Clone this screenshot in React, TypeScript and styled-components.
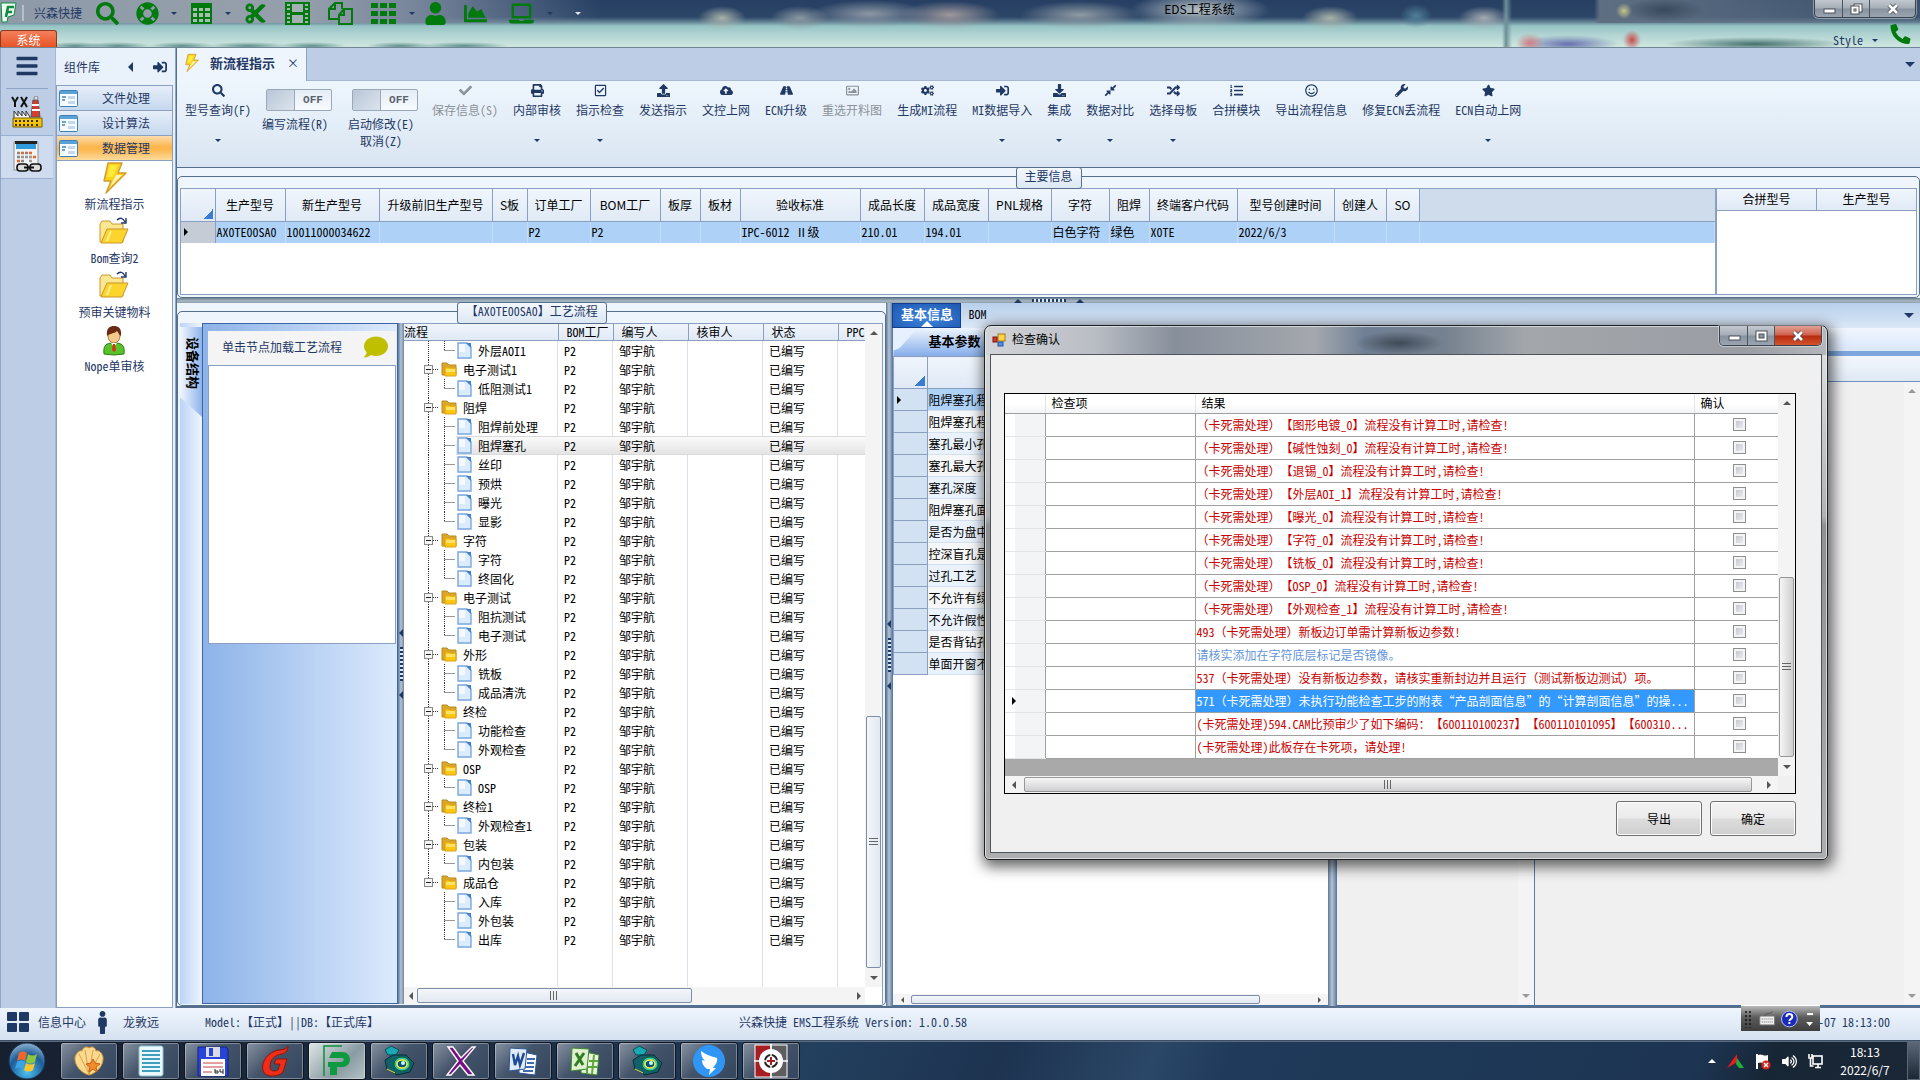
import React from "react";
import styled, { createGlobalStyle, css } from "styled-components";
import {
  FaSearch, FaLifeRing, FaCut, FaUser, FaChartArea, FaLaptop,
  FaCheck, FaPrint, FaRegCheckSquare, FaUpload, FaCloudUploadAlt, FaRoad, FaRegImage, FaCogs,
  FaSignInAlt, FaDownload, FaCompressAlt, FaRandom, FaListOl, FaRegSmile, FaWrench, FaStar,
  FaPhoneAlt, FaComment, FaBars, FaMale, FaVolumeUp,
} from "react-icons/fa";

const song = '"Noto Sans Mono CJK SC", "Noto Sans CJK SC", sans-serif';
const hei = '"Noto Sans CJK SC", sans-serif';
const navy = "#1f3864";
const edge = "#566f8c";
const line = "#8ba0c0";

const Global = createGlobalStyle`
  * { box-sizing: border-box; }
  body { margin: 0; overflow: hidden; font: 12px/16px ${song}; text-spacing-trim: space-all; color: #000; background: #1d3149; }
  button { font: inherit; color: inherit; background: none; border: 0; padding: 0; margin: 0; white-space: nowrap; }
  input { margin: 0; }
  table { border-collapse: collapse; table-layout: fixed; }
  th, td { padding: 0; font-weight: 400; text-align: left; white-space: nowrap; overflow: hidden; }
`;

const Desktop = styled.div`
  position: relative;
  height: 100vh;
  display: grid;
  grid-template-rows: 48px minmax(0, 1fr) 33px 39px;
`;

/* ---------- shared bits ---------- */
const Tri = styled.i<{ $dir: "up" | "down" | "left" | "right"; $s?: number; $c?: string }>`
  display: block;
  width: 0;
  height: 0;
  flex: none;
  border: ${(p) => p.$s ?? 4}px solid transparent;
  ${(p) => {
    const c = p.$c ?? navy;
    if (p.$dir === "down") return css`border-top-color: ${c}; border-bottom-width: 0;`;
    if (p.$dir === "up") return css`border-bottom-color: ${c}; border-top-width: 0;`;
    if (p.$dir === "left") return css`border-right-color: ${c}; border-left-width: 0;`;
    return css`border-left-color: ${c}; border-right-width: 0;`;
  }}
`;

const Bar = styled.div<{ $v?: boolean; $size: number }>`
  display: flex;
  flex: none;
  flex-direction: ${(p) => (p.$v ? "column" : "row")};
  ${(p) => (p.$v ? `width: ${p.$size}px;` : `height: ${p.$size}px;`)}
  background: #f4f4f5;
`;
const BarEnd = styled.button<{ $v?: boolean; $size: number }>`
  flex: none;
  ${(p) => (p.$v ? `height: ${p.$size}px;` : `width: ${p.$size}px;`)}
  display: grid;
  place-items: center;
`;
const Gap = styled.div<{ $grow: number }>`
  flex: ${(p) => p.$grow} 1 0;
`;
const Thumb = styled.div<{ $grow: number; $v?: boolean; $grey?: boolean }>`
  flex: ${(p) => p.$grow} 1 0;
  display: grid;
  place-items: center;
  border: 1px solid ${(p) => (p.$grey ? "#979797" : "#7f8ea6")};
  border-radius: 2px;
  ${(p) => (p.$v ? "margin: 0 1px;" : "margin: 1px 0;")}
  background: linear-gradient(${(p) => (p.$v ? "to right" : "to bottom")}, ${(p) => (p.$grey ? "#f6f6f6, #cfcfd1" : "#f3f7fb, #e2e8f0")});
`;
const Grip = styled.i<{ $v?: boolean }>`
  display: block;
  width: ${(p) => (p.$v ? 9 : 8)}px;
  height: ${(p) => (p.$v ? 8 : 9)}px;
  background: repeating-linear-gradient(${(p) => (p.$v ? "to bottom" : "to right")}, #666 0 1px, transparent 1px 3px);
`;

function Scroll({ v, size = 16, end = 18, before = 0, thumb = 0, after = 1, grip, grey, c = "#555" }: {
  v?: boolean; size?: number; end?: number; before?: number; thumb?: number; after?: number; grip?: boolean; grey?: boolean; c?: string;
}) {
  const s = size > 12 ? 4 : 3;
  return (
    <Bar $v={v} $size={size}>
      <BarEnd $v={v} $size={end} aria-label={v ? "向上" : "向左"}><Tri $dir={v ? "up" : "left"} $s={s} $c={c} /></BarEnd>
      <Gap $grow={before} />
      {thumb > 0 && <Thumb $v={v} $grow={thumb} $grey={grey}>{grip && <Grip $v={v} />}</Thumb>}
      <Gap $grow={after} />
      <BarEnd $v={v} $size={end} aria-label={v ? "向下" : "向右"}><Tri $dir={v ? "down" : "right"} $s={s} $c={c} /></BarEnd>
    </Bar>
  );
}

/* ---------- title area ---------- */
const Title = styled.header`
  display: grid;
  grid-template-columns: auto minmax(0, 1fr) auto;
  border-bottom: 1px solid #6f8796;
  background:
    radial-gradient(ellipse 24px 12px at 722px 18px, #a9b2a9, transparent),
    radial-gradient(ellipse 30px 12px at 800px 18px, #8b98a0, transparent),
    radial-gradient(ellipse 60px 14px at 870px 14px, #8c97a4, transparent),
    radial-gradient(ellipse 50px 14px at 950px 15px, #a0989c, transparent),
    radial-gradient(ellipse 60px 14px at 1080px 15px, #8f9aa3, transparent),
    radial-gradient(ellipse 70px 18px at 1200px 10px, #b9c3c8, transparent),
    radial-gradient(ellipse 28px 12px at 1330px 18px, #a9b3ab, transparent),
    radial-gradient(ellipse 16px 12px at 1416px 16px, #4f7f98, transparent),
    radial-gradient(ellipse 26px 12px at 1484px 18px, #a6acb2, transparent),
    radial-gradient(ellipse 8px 8px at 1624px 11px, #c4c48c, transparent),
    radial-gradient(ellipse 40px 12px at 1664px 10px, #39495c, transparent),
    linear-gradient(to right, transparent 1502px, #6d8f96 1506px, transparent 1512px),
    radial-gradient(ellipse 14px 10px at 1530px 43px, #cf7f84, transparent),
    radial-gradient(ellipse 50px 9px at 1568px 44px, #6670b0, transparent),
    radial-gradient(ellipse 9px 10px at 1632px 40px, #c94a48, transparent),
    radial-gradient(ellipse 90px 7px at 1755px 44px, #44706f, transparent),
    radial-gradient(ellipse 30px 4px at 75px 46px, #5d8d8a, transparent),
    radial-gradient(ellipse 34px 4px at 118px 46px, #5d8d8a, transparent),
    radial-gradient(ellipse 34px 4px at 182px 46px, #5d8d8a, transparent),
    radial-gradient(ellipse 40px 4px at 248px 46px, #5d8d8a, transparent),
    radial-gradient(ellipse 34px 4px at 312px 46px, #5d8d8a, transparent),
    radial-gradient(ellipse 34px 4px at 400px 46px, #5d8d8a, transparent),
    radial-gradient(ellipse 44px 4px at 464px 46px, #5d8d8a, transparent),
    linear-gradient(to right, transparent 1594px, #5f6f82 1600px, #5f6f8255 100%) 0 0 / 100% 23px no-repeat,
    linear-gradient(to right, #8e9aa8, #96a0ac 300px, #76849a 420px, transparent 600px) 0 0 / 100% 23px no-repeat,
    linear-gradient(#263f63, #2c4668 17px, #56748a 21px, #97c4c5 26px, #b4d6d4 36px, #cfe6df);
`;
const TitleLeft = styled.div`
  display: flex;
  flex-direction: column;
  justify-content: space-between;
`;
const Quick = styled.div`
  display: flex;
  height: 26px;
  align-items: center;
  color: ${navy};
`;
const Brand = styled.span`
  padding: 0 13px 0 10px;
  margin-left: 5px;
  border-left: 2px solid #b6bec9;
`;
const QuickBtn = styled.button<{ $w: number }>`
  width: ${(p) => p.$w}px;
  height: 24px;
  color: #007a0c;
  display: flex;
  align-items: center;
  svg { width: 25px; height: 23px; }
`;
const QuickArrow = styled.button<{ $w: number }>`
  width: ${(p) => p.$w}px;
`;
const SystemTab = styled.button`
  width: 57px;
  height: 17px;
  color: #fff;
  line-height: 18px;
  border: 1px solid #8c3a20;
  border-bottom: 0;
  border-radius: 3px 3px 0 0;
  background: linear-gradient(#f4805c, #e85426);
  overflow: hidden;
`;
const AppName = styled.h1`
  margin: 0;
  text-align: center;
  font: 12px/17px ${hei};
`;
const TitleRight = styled.div`
  display: flex;
  flex-direction: column;
  align-items: flex-end;
  justify-content: space-between;
  padding-right: 4px;
`;
const Caption = styled.div`
  display: flex;
  border: 1px solid #38424e;
  border-top: 0;
  border-radius: 0 0 5px 5px;
  overflow: hidden;
  box-shadow: 0 0 0 1px #ffffff66;
`;
const CapBtn = styled.button<{ $w: number; $h: number; $red?: boolean }>`
  width: ${(p) => p.$w}px;
  height: ${(p) => p.$h}px;
  display: grid;
  place-items: center;
  background: ${(p) => (p.$red ? "linear-gradient(#e2a094, #cf5f4a 48%, #b8290d 52%, #d4552f)" : "linear-gradient(#c2c8cf, #a5adb6 48%, #8792a0 52%, #9ba5b0)")};
  & + & { border-left: 1px solid #4a5562; }
`;
const StyleRow = styled.div`
  display: flex;
  align-items: center;
  gap: 12px;
  height: 26px;
  color: ${navy};
  padding-right: 5px;
  svg { width: 21px; height: 20px; color: #007a0c; }
`;
const StyleBtn = styled.button`
  display: flex;
  align-items: center;
  gap: 9px;
  padding-top: 12px;
`;

const CapIcon = ({ k }: { k: "min" | "max" | "close" | "restore" }) => (
  <svg width="14" height="12" viewBox="0 0 14 12" fill="none">
    {k === "min" && <rect x="2" y="6" width="11" height="4" fill="#fff" stroke="#4a5058" />}
    {k === "max" && <><rect x="2" y="1" width="11" height="10" fill="#fff" stroke="#4a5058" /><rect x="5" y="4" width="5" height="4" fill="#8b95a0" stroke="#4a5058" /></>}
    {k === "restore" && <><rect x="5" y="1" width="8" height="8" fill="#fff" stroke="#4a5058" /><rect x="2" y="3" width="8" height="8" fill="#fff" stroke="#4a5058" /><rect x="5" y="6" width="2" height="2" stroke="#4a5058" /></>}
    {k === "close" && <><path d="M3 2l8 8M11 2l-8 8" stroke="#4a5058" strokeWidth="4.4" /><path d="M3 2l8 8M11 2l-8 8" stroke="#fff" strokeWidth="2.6" /></>}
  </svg>
);
const TableIcon = () => (
  <svg viewBox="0 0 25 23"><path d="M2 1h21v21H2z" fill="currentColor" /><path d="M4 6h4v3H4zM10 6h4v3h-4zM16 6h5v3h-5zM4 11h4v4H4zM10 11h4v4h-4zM16 11h5v4h-5zM4 17h4v3H4zM10 17h4v3h-4zM16 17h5v3h-5z" fill="#a9bdb4" /></svg>
);
const FilmIcon = () => (
  <svg viewBox="0 0 25 23"><path d="M0 0h25v23H0z" fill="currentColor" /><path d="M7 2h11v8H7zM7 13h11v8H7zM2 2h3v2H2zM2 6h3v2H2zM2 11h3v2H2zM2 15h3v2H2zM2 19h3v2H2zM20 2h3v2h-3zM20 6h3v2h-3zM20 11h3v2h-3zM20 15h3v2h-3zM20 19h3v2h-3z" fill="#a3b0b4" /></svg>
);
const CopyIcon = () => (
  <svg viewBox="0 0 25 23" fill="none" stroke="currentColor" strokeWidth="2"><path d="M10 17H1V7l6-6h7v6" /><path d="M1 7h6V1M11 13l5-6h8v15H11zM11 13h5V7" /></svg>
);
const BlocksIcon = () => (
  <svg viewBox="0 0 25 23" fill="currentColor"><path d="M0 1h7v5H0zM9 1h7v5H9zM18 1h7v5h-7zM0 9h7v5H0zM9 9h7v5H9zM18 9h7v5h-7zM0 17h7v5H0zM9 17h7v5H9zM18 17h7v5h-7z" /></svg>
);

/* ---------- left side ---------- */
const Main = styled.div`
  display: grid;
  grid-template-columns: 55px 121px minmax(0, 1fr);
  background: #bccde5;
`;
const Rail = styled.nav`
  display: flex;
  flex-direction: column;
  align-items: stretch;
  padding-right: 2px;
  border-left: 1px solid #90a6c4;
  background: #bccde5;
`;
const RailBtn = styled.button<{ $h: number; $on?: boolean }>`
  height: ${(p) => p.$h}px;
  display: grid;
  place-items: center;
  color: ${navy};
  ${(p) => p.$on && "background: #cfdcef; border-top: 1px solid #9bb0ce; border-bottom: 1px solid #9bb0ce;"}
`;
const BarsBtn = styled(RailBtn)`
  padding-bottom: 5px;
`;
const RailRule = styled.hr`
  margin: 0 5px;
  border: 0;
  border-top: 1px solid #8fa6c6;
`;
const Library = styled.aside`
  display: flex;
  flex-direction: column;
  border-left: 1px solid #a5b7d1;
  border-right: 1px solid #90a6c4;
  padding-right: 2px;
  background: #e9f1fa;
`;
const LibHead = styled.div`
  height: 37px;
  display: flex;
  align-items: center;
  padding: 0 6px 0 8px;
  color: ${navy};
  font-family: ${hei};
  span { flex: 1; }
  button { margin-left: 20px; display: grid; place-items: center; }
  svg { width: 14px; height: 14px; }
`;
const LibGroup = styled.button<{ $on?: boolean }>`
  height: 25px;
  display: flex;
  align-items: center;
  gap: 24px;
  padding-left: 2px;
  color: ${navy};
  border: 1px solid ${line};
  border-bottom: 0;
  background: ${(p) => (p.$on ? "linear-gradient(#fbdcae, #fcb64e 45%, #fcb64e 55%, #fddc9c)" : "linear-gradient(#e6eef9, #c6d8ee)")};
`;
const LibBody = styled.div`
  flex: 1;
  display: flex;
  flex-direction: column;
  align-items: center;
  background: #fff;
  border: 1px solid ${line};
  padding-top: 1px;
`;
const LibItem = styled.button`
  height: 54px;
  display: flex;
  flex-direction: column;
  align-items: center;
  justify-content: space-between;
  color: ${navy};
  padding-bottom: 4px;
  svg { flex: none; }
`;

const Bolt = ({ w = 26, h = 32 }: { w?: number; h?: number }) => (
  <svg width={w} height={h} viewBox="0 0 26 32">
    <path d="M7 1h14l-4 10h8L5 31l5-12H3z" fill="#fbd21c" stroke="#d39a2d" strokeWidth="1.4" strokeLinejoin="round" />
    <path d="M9 3h8l-5 12H6z" fill="#fdea3c" /><path d="M15 13h6L9 25l4-8z" fill="#fdf3b4" />
  </svg>
);
const FolderOpen = () => (
  <svg width="30" height="28" viewBox="0 0 30 28">
    <path d="M1 8l2-3h8l2 3h11v18H1z" fill="#fbe692" stroke="#c99a2c" /><path d="M2 27l6-14h21l-6 14z" fill="#fcd52c" stroke="#c9952a" />
    <path d="M8 25l4-10" stroke="#fdf09a" strokeWidth="2" /><path d="M18 4c3-3 6-2 8 2M27 2v5h-5" fill="none" stroke="#23386e" strokeWidth="1.4" />
  </svg>
);
const Person = () => (
  <svg width="26" height="32" viewBox="0 0 26 32">
    <path d="M3 30c-1-9 2-11 10-11s11 2 10 11q-10 2-20 0z" fill="#56c32b" stroke="#2f7d16" /><ellipse cx="13" cy="12" rx="6" ry="7" fill="#f4c98a" stroke="#a87938" />
    <path d="M6 12C5 4 9 2 13 2s8 2 7 10c-2-1-3-4-4-5-3 3-7 2-10 5z" fill="#6b2a14" /><path d="M10 19l3 4 3-4z" fill="#fff" /><path d="M12 20h2l1 6-2 2-2-2z" fill="#d7301b" />
  </svg>
);
const FormIcon = () => (
  <svg width="19" height="17" viewBox="0 0 19 17">
    <rect x=".5" y=".5" width="18" height="16" rx="1" fill="#f6fbff" stroke="#3d7eb5" /><rect x="1" y="1" width="17" height="3" fill="#5aa2d6" />
    <path d="M3 7h4M3 10h3" stroke="#4a86b8" strokeWidth="1.5" /><rect x="9" y="6" width="7" height="3" fill="#c4d8ec" /><rect x="9" y="11" width="7" height="3" fill="#c4d8ec" />
  </svg>
);
const Factory = () => (
  <svg width="32" height="32" viewBox="0 0 32 32">
    <path d="M1 1l3 5v5M7 1L4 6" stroke="#111" strokeWidth="2" fill="none" /><path d="M10 1l6 10M16 1l-6 10" stroke="#111" strokeWidth="2" />
    <path d="M22 4h5l2 17h-9z" fill="#d83c2b" stroke="#555" /><path d="M21 9h7M21 14h8" stroke="#fff" strokeWidth="2" /><circle cx="25" cy="2" r="2" fill="#ddd" stroke="#888" />
    <path d="M3 22v-7l4 5v-5l4 5v-5l4 5v-5l4 6v3H3z" fill="#f4f4f4" stroke="#333" /><path d="M2 22h29v9H2z" fill="#f2c40e" stroke="#7c6200" />
    <path d="M5 24v2M9 24v2M13 24v2M17 24v2M21 24v2M26 24v2M5 28v2M9 28v2M13 28v2M17 28v2M21 28v2M26 28v2" stroke="#3b3000" strokeWidth="2" />
  </svg>
);
const Calc = () => (
  <svg width="30" height="34" viewBox="0 0 30 34">
    <rect x="2" y="2" width="24" height="28" fill="#f1f3f4" stroke="#8a9299" /><rect x="3" y="1" width="22" height="3" fill="#222" /><rect x="4" y="4" width="20" height="5" fill="#2f9bdc" />
    <path d="M5 13h3M13 13h3M5 17h3M9 21h3" stroke="#888" strokeWidth="2.4" /><path d="M9 13h3M17 13h3M21 17h3M5 21h3" stroke="#f0632a" strokeWidth="2.4" /><path d="M9 17h3M13 17h3M17 17h3M17 21h3" stroke="#999" strokeWidth="2.4" />
    <rect x="5" y="24" width="11" height="7" rx="3" fill="#ddd" stroke="#111" strokeWidth="1.6" /><rect x="18" y="24" width="11" height="7" rx="3" fill="#ddd" stroke="#111" strokeWidth="1.6" /><path d="M12 27.500h10" stroke="#111" strokeWidth="2" />
  </svg>
);

/* ---------- workspace ---------- */
const Work = styled.main`
  display: grid;
  grid-template-rows: 33px 87px 130px 5px minmax(0, 1fr);
  min-width: 0;
  border-left: 1px solid ${edge};
  border-bottom: 2px solid ${edge};
`;
const DocTabs = styled.div`
  display: flex;
  align-items: center;
  justify-content: space-between;
  padding-right: 5px;
  border-bottom: 1px solid #a7b7cf;
  background: #bccde5;
`;
const DocTab = styled.div`
  align-self: stretch;
  display: flex;
  align-items: center;
  gap: 11px;
  width: 130px;
  padding: 0 7px 4px 7px;
  margin-bottom: -1px;
  color: ${navy};
  background: #eef5fc;
  border-right: 1px solid #8ea3c0;
  strong { flex: 1; font-size: 13px; }
  svg { width: 15px; height: 22px; }
`;
const Toolbar = styled.div`
  display: flex;
  color: ${navy};
  background: linear-gradient(#eef6fd, #d9e5f2);
  border-bottom: 1px solid ${edge};
`;
const Tool = styled.button`
  display: grid;
  grid-template-rows: 18px 22px 38px;
  place-items: center;
  align-content: start;
  padding: 0 7px 0 8px;
  &:disabled { color: #8c9299; }
  svg { width: 13px; height: 13px; }
`;
const Toggles = styled.div`
  display: flex;
  margin-left: -6px;
`;
const Toggle = styled.label`
  width: 86px;
  padding-top: 8px;
  display: flex;
  flex-direction: column;
  align-items: center;
  line-height: 17px;
  white-space: nowrap;
`;
const Track = styled.span`
  display: flex;
  width: 66px;
  height: 22px;
  margin: 0 0 4px 8px;
  border: 1px solid #9aa8bb;
  border-radius: 2px;
  background: linear-gradient(#e4ecf5, #f8fbfe);
  color: #5a6470;
  font: bold 11px/20px "Liberation Mono", monospace;
  span { flex: 1; text-align: center; }
`;
const SwitchInput = styled.input`
  appearance: none;
  width: 28px;
  height: 20px;
  border-right: 1px solid #9aa8bb;
  background: linear-gradient(135deg, #b9c6d6, #dbe4ee);
`;

const Pane = styled.section`
  display: flex;
  min-height: 0;
  min-width: 0;
  background: #eef5fc;
  padding-top: 8px;
`;
const Group = styled.div<{ $pb: number }>`
  position: relative;
  flex: 1;
  display: flex;
  min-width: 0;
  border: 1px solid ${edge};
  border-radius: 5px;
  padding: 11px 2px ${(p) => p.$pb}px;
`;
const Badge = styled.h2`
  position: absolute;
  top: -10px;
  left: 50%;
  transform: translateX(-50%);
  margin: 0;
  height: 22px;
  padding: 0 8px;
  font: 12px/15px ${song};
  color: ${navy};
  white-space: nowrap;
  border: 1px solid ${edge};
  border-radius: 3px;
  background: linear-gradient(#f3f8fd, #dde8f4);
`;
const GridBox = styled.div<{ $w?: number }>`
  ${(p) => (p.$w ? `flex: none; width: ${p.$w}px;` : "flex: 1; min-width: 0;")}
  border: 1px solid ${line};
  background: #fff;
  overflow: hidden;
`;
const DataTable = styled.table<{ $h: number }>`
  width: 100%;
  th {
    height: ${(p) => p.$h}px;
    font-family: ${hei};
    text-align: center;
    border-right: 1px solid ${line};
    border-bottom: 1px solid ${line};
    background: linear-gradient(#f0f5fc, #e0eaf5);
  }
  th:last-child { border-right: 0; }
  td {
    height: 22px;
    padding-left: 1px;
    background: #aed2f7;
    border-right: 1px solid #c4dcf5;
  }
`;
const RestTh = styled.th`
  && { background: #cfdcec; }
`;
const CornerTh = styled.th`
  && { background: linear-gradient(135deg, transparent 50%, #3a7bd5 50%) calc(100% - 2px) calc(100% - 2px) / 10px 10px no-repeat, linear-gradient(#f0f5fc, #dfe9f5); }
`;
const PointerTd = styled.td`
  && { background: #c5ccd6; padding-left: 3px; border-right-color: ${line}; }
`;

const SplitH = styled.div`
  display: flex;
  justify-content: center;
  align-items: center;
  gap: 10px;
  background: linear-gradient(#6f8090, #a9b8c4 60%, #8b9caa);
`;
const SplitV = styled.div<{ $w: number }>`
  width: ${(p) => p.$w}px;
  flex: none;
  display: flex;
  flex-direction: column;
  justify-content: center;
  align-items: center;
  gap: 10px;
  background: linear-gradient(to right, #60799a, #b5c4d4 50%, #6d86a5);
`;
const Dots = styled.i<{ $v?: boolean }>`
  ${(p) => (p.$v ? "width: 3px; height: 34px;" : "height: 3px; width: 34px;")}
  background: repeating-linear-gradient(${(p) => (p.$v ? "to bottom" : "to right")}, ${navy} 0 2px, #dbe6f3 2px 4px);
`;

const Lower = styled.div`
  display: grid;
  grid-template-columns: minmax(0, 709fr) 6px minmax(0, 1027fr);
  min-height: 0;
  background: #eef5fc;
`;

const SideTabs = styled.div`
  width: 22px;
  flex: none;
  padding-top: 4px;
  background: linear-gradient(to right, #bcd4f8, #eef5ff);
`;
const SideTab = styled.button`
  width: 22px;
  height: 90px;
  padding-left: 3px;
  padding-bottom: 18px;
  writing-mode: vertical-rl;
  text-orientation: sideways;
  text-align: center;
  font-weight: 700;
  font-size: 13px;
  background: linear-gradient(to right, #f2f7ff, #8fb4ea);
  clip-path: polygon(0 0, 100% 0, 100% 100%, 0 78%);
`;
const Device = styled.div`
  width: 196px;
  flex: none;
  padding: 7px 1px 0 5px;
  border: 1px solid #3e64a6;
  background: linear-gradient(to right, #8db3e9, #dceafc);
`;
const DeviceHead = styled.div`
  height: 34px;
  display: flex;
  align-items: center;
  justify-content: space-between;
  padding: 0 7px 2px 14px;
  color: ${navy};
  background: #f4f4f4;
  svg { width: 26px; height: 24px; color: #bfbf00; }
`;
const DeviceList = styled.div`
  height: 279px;
  background: #fff;
  border: 1px solid ${line};
`;
const TreeBox = styled.div`
  flex: 1;
  min-width: 0;
  display: grid;
  grid-template-columns: minmax(0, 1fr) 17px;
  grid-template-rows: minmax(0, 1fr) 17px;
  border-right: 1px solid ${line};
  border-top: 1px solid ${line};
  background: #fff;
`;
const TreeView = styled.div`
  overflow: hidden;
  background: linear-gradient(to right, transparent 153px, #dcdfe4 153px 154px, transparent 154px 208px, #dcdfe4 208px 209px, transparent 209px 283px, #dcdfe4 283px 284px, transparent 284px 358px, #dcdfe4 358px 359px, transparent 359px 433px, #dcdfe4 433px 434px, transparent 434px);
`;
const TreeTable = styled.table`
  width: 100%;
  th {
    height: 16px;
    line-height: 14px;
    padding-left: 8px;
    border-right: 1px solid ${line};
    border-bottom: 1px solid ${line};
    background: linear-gradient(#f0f5fc, #dfe9f5);
  }
  th:first-child { padding-left: 0; }
  th:last-child { border-right: 0; }
`;
const TreeRow = styled.tr<{ $sel?: boolean }>`
  td { height: 19px; padding-left: 6px; line-height: 17px; }
  td:first-child { padding-left: 0; }
  ${(p) => p.$sel && css`
    td:not(:first-child), td:first-child span { background: linear-gradient(#dadada 1px, #fafafa 1px, #e4e4e4 18px, #dadada 18px); }
  `}
`;
const NodeCell = styled.div`
  display: flex;
  height: 19px;
  svg { flex: none; }
`;
const NodeLabel = styled.span`
  flex: 1;
  display: flex;
  align-items: center;
  gap: 6px;
  padding-left: 1px;
  line-height: 17px;
`;

/* ---------- right detail ---------- */
const Detail = styled.div`
  display: grid;
  grid-template-rows: 25px minmax(0, 1fr);
  min-height: 0;
`;
const BlueTabs = styled.div`
  display: flex;
  align-items: center;
  padding-right: 6px;
  background: linear-gradient(#b9cfeb, #dbe8f7);
`;
const BlueTab = styled.button<{ $on?: boolean }>`
  position: relative;
  align-self: stretch;
  padding: 0 7px 3px;
  ${(p) => p.$on && css`
    width: 69px;
    color: #fff;
    font-weight: 700;
    font-size: 13px;
    background: radial-gradient(ellipse at 50% 60%, #3f86dd, #1d57b0);
    border: 1px solid #123f8c;
    &::after {
      content: "";
      position: absolute;
      left: 50%;
      bottom: 0;
      margin-left: -6px;
      border: 6px solid transparent;
      border-top-width: 0;
      border-bottom-color: #fff;
    }
  `}
`;
const Filler = styled.div`
  flex: 1;
`;
const Panels = styled.div`
  display: grid;
  grid-template-columns: minmax(0, 435fr) 8px minmax(0, 198fr) minmax(0, 385fr);
  min-height: 0;
`;
const Panel = styled.div`
  display: flex;
  flex-direction: column;
  min-width: 0;
  min-height: 0;
  border-left: 1px solid #5a7cae;
  border-bottom: 1px solid #4a6ca0;
`;
const SubTabs = styled.div<{ $plain?: boolean }>`
  height: 28px;
  flex: none;
  display: flex;
  border-bottom: ${(p) => (p.$plain ? "5px solid #7da5de" : "0")};
  background: ${(p) => (p.$plain ? "linear-gradient(#f0f6fe, #dae8fb)" : "linear-gradient(to right, #e6f0fe, #d2e3fa)")};
`;
const SubTab = styled.button`
  width: 150px;
  padding: 0 0 3px 35px;
  text-align: left;
  font-weight: 700;
  font-size: 13px;
  background: linear-gradient(#eef5ff, #86aeea);
  clip-path: polygon(0 80%, 6px 72%, 22px 10%, 30px 0, 100% 0, 100% 100%, 0 100%);
`;
const ParamTable = styled.table`
  width: 100%;
  th { height: 32px; border: 1px solid ${line}; background: linear-gradient(#f0f5fc, #dfe9f5); }
  td { height: 22px; padding-left: 0; background: #eaf3fd; border-bottom: 1px solid #d2e0f0; }
  tr:nth-child(even) td { background: #f6f7f8; }
  td:first-child, tr:nth-child(even) td:first-child { background: #d3e2f3; border: 1px solid ${line}; padding-left: 3px; }
  tr:first-child td:last-child { background: #aed2f7; }
`;
const Fill = styled.div<{ $bg: string }>`
  flex: 1;
  display: flex;
  justify-content: flex-end;
  min-height: 0;
  background: ${(p) => p.$bg};
`;
const PanelHead = styled.div`
  height: 26px;
  flex: none;
  background: linear-gradient(#f3f7fc, #dfe9f4);
  border-bottom: 1px solid #6f8fbe;
`;

/* ---------- dialog ---------- */
const Dialog = styled.section`
  position: absolute;
  top: 325px;
  right: 92px;
  width: 844px;
  padding: 0 5px 6px;
  border: 1px solid #1c1f24;
  border-radius: 7px 7px 5px 5px;
  background:
    radial-gradient(ellipse 44px 12px at 414px 17px, #3f4a56, transparent),
    linear-gradient(to right, #d2d4d8, #b9bdc4 110px, #878f9b 190px, #a4a8ae 330px, #6f7f94 380px, #76818f 460px, #a3a6ab 540px, #9a9ea4 760px, #b4b8bd) 0 0 / 100% 29px no-repeat,
    linear-gradient(#e2e3e4, #b0b1b3 190px, #8f9092 200px, #adaeb0);
  box-shadow: inset 0 0 0 1px #f2f2f2aa, 2px 4px 14px 3px #00000099;
`;
const DlgTitle = styled.div`
  display: flex;
  align-items: flex-start;
  height: 28px;
  h2 { flex: 1; margin: 0; font: 12px/16px ${hei}; padding: 5px 0 0 6px; }
  > svg { margin: 7px 0 0 2px; }
`;
const DlgBody = styled.div`
  border: 1px solid #4d545c;
  background: #f0f0f0;
  padding: 38px 25px 16px 13px;
`;
const CheckBoxArea = styled.div`
  display: grid;
  grid-template-columns: minmax(0, 1fr) 17px;
  border: 1px solid #000;
  height: 401px;
  grid-template-rows: minmax(0, 1fr) 17px;
  background: #f0f0f0;
`;
const CheckView = styled.div`
  overflow: hidden;
  background: #a9a9a9;
`;
const CheckTable = styled.table`
  width: 100%;
  background: #fff;
  th {
    height: 19px;
    line-height: 18px;
    padding-left: 6px;
    border-right: 1px solid #e3e4e6;
    border-bottom: 1px solid #a0a0a0;
    background: linear-gradient(#fff 50%, #f3f4f6);
  }
  td {
    height: 23px;
    line-height: 18px;
    padding: 0 2px 0 1px;
    border-right: 1px solid #a0a0a0;
    border-bottom: 1px solid #a0a0a0;
    text-overflow: ellipsis;
  }
  td:first-child { background: linear-gradient(to right, #fff 25%, #f3f4f6 25%); border-bottom-color: #e3e4e6; padding-left: 7px; }
  td:last-child { padding-left: 8px; border-right: 0; }
  th:last-child { border-right: 0; }
`;
const Result = styled.td<{ $c: string; $sel?: boolean }>`
  color: ${(p) => p.$c};
  ${(p) => p.$sel && "background: #3399ff;"}
`;
const Tick = styled.input`
  appearance: none;
  display: block;
  margin: 0 auto;
  width: 13px;
  height: 13px;
  border: 1px solid #8e8f8f;
  background: linear-gradient(135deg, #b9bfc7, #f6f6f6);
  box-shadow: inset 0 0 0 2px #f4f4f4;
`;
const DlgButtons = styled.div`
  display: flex;
  justify-content: flex-end;
  gap: 8px;
  padding-top: 7px;
`;
const DlgBtn = styled.button`
  width: 86px;
  height: 35px;
  border: 1px solid #707070;
  border-radius: 3px;
  background: linear-gradient(#f3f3f3, #ebebeb 48%, #dcdcdc 52%, #cfcfcf);
  box-shadow: inset 0 0 0 1px #fcfcfc;
`;

/* ---------- status bar and taskbar ---------- */
const Status = styled.footer`
  display: grid;
  grid-template-columns: 732px 1fr auto;
  align-items: center;
  padding: 0 30px 4px 7px;
  color: ${navy};
  background: linear-gradient(#eef5fd, #d6e2f0);
  border-bottom: 1px solid #3c4f66;
`;
const StatusLeft = styled.div`
  display: flex;
  align-items: center;
`;
const StatusBtn = styled.button<{ $mr: number }>`
  display: flex;
  align-items: center;
  gap: 9px;
  margin-right: ${(p) => p.$mr}px;
`;
const Ime = styled.div`
  position: absolute;
  right: 100px;
  bottom: 49px;
  width: 79px;
  height: 26px;
  display: flex;
  align-items: center;
  justify-content: space-between;
  padding: 0 4px;
  border-top: 1px solid #fff;
  background: linear-gradient(#b8b8b8, #5c5c5c 45%, #3e3e3e);
`;
const Taskbar = styled.footer`
  display: flex;
  align-items: stretch;
  padding-left: 8px;
  border-top: 1px solid #5a6b80;
  background: linear-gradient(115deg, #17202f, #1c2f49 30%, #23405f 42%, #1d3350 52%, #2b4767 60%, #1f3a5a 64%, #1d3553 88%, #172635 92%, #1b2737);
`;
const Orb = styled.button`
  width: 38px;
  margin-right: 14px;
`;
const TaskBtn = styled.button<{ $on?: boolean }>`
  width: 58px;
  margin-right: 4px;
  display: grid;
  place-items: center;
  border: 1px solid #10161f;
  border-radius: 3px;
  box-shadow: inset 0 0 0 1px #ffffff55;
  background: ${(p) => (p.$on ? "linear-gradient(135deg, #dfe7e6, #8a9ba3 60%, #b4c2c6)" : "linear-gradient(135deg, #8793a2, #44546a 45%, #33465e)")};
`;
const Tray = styled.div`
  display: flex;
  align-items: center;
  gap: 11px;
  color: #fff;
  svg { flex: none; }
`;
const Clock = styled.time`
  width: 62px;
  text-align: center;
  font: 12px/18px ${hei};
`;
const ShowDesk = styled.button`
  width: 13px;
  align-self: stretch;
  border: 1px solid #5b6878;
  background: linear-gradient(#5a6675, #1c2736);
`;

/* ---------- data ---------- */
const tools: { icon: React.ReactNode; text: string; arrow?: boolean; off?: boolean }[] = [
  { icon: <FaCheck />, text: "保存信息(S)", off: true },
  { icon: <FaPrint />, text: "内部审核", arrow: true },
  { icon: <FaRegCheckSquare />, text: "指示检查", arrow: true },
  { icon: <FaUpload />, text: "发送指示" },
  { icon: <FaCloudUploadAlt />, text: "文控上网" },
  { icon: <FaRoad />, text: "ECN升级" },
  { icon: <FaRegImage />, text: "重选开料图", off: true },
  { icon: <FaCogs />, text: "生成MI流程" },
  { icon: <FaSignInAlt />, text: "MI数据导入", arrow: true },
  { icon: <FaDownload />, text: "集成", arrow: true },
  { icon: <FaCompressAlt />, text: "数据对比", arrow: true },
  { icon: <FaRandom />, text: "选择母板", arrow: true },
  { icon: <FaListOl />, text: "合拼模块" },
  { icon: <FaRegSmile />, text: "导出流程信息" },
  { icon: <FaWrench />, text: "修复ECN丢流程" },
  { icon: <FaStar />, text: "ECN自动上网", arrow: true },
];

const mainCols: [string, number, string][] = [
  ["生产型号", 70, "AX0TE00SA0"], ["新生产型号", 94, "10011000034622"], ["升级前旧生产型号", 113, ""], ["S板", 35, ""],
  ["订单工厂", 63, "P2"], ["BOM工厂", 70, "P2"], ["板厚", 40, ""], ["板材", 40, ""], ["验收标准", 120, "IPC-6012 Ⅱ级"],
  ["成品长度", 64, "210.01"], ["成品宽度", 64, "194.01"], ["PNL规格", 63, ""], ["字符", 58, "白色字符"], ["阻焊", 40, "绿色"],
  ["终端客户代码", 88, "X0TE"], ["型号创建时间", 97, "2022/6/3"], ["创建人", 52, ""], ["SO", 33, ""],
];

const tree: [string, string[]][] = [
  ["", ["外层AOI1"]],
  ["电子测试1", ["低阻测试1"]],
  ["阻焊", ["阻焊前处理", "阻焊塞孔", "丝印", "预烘", "曝光", "显影"]],
  ["字符", ["字符", "终固化"]],
  ["电子测试", ["阻抗测试", "电子测试"]],
  ["外形", ["铣板", "成品清洗"]],
  ["终检", ["功能检查", "外观检查"]],
  ["OSP", ["OSP"]],
  ["终检1", ["外观检查1"]],
  ["包装", ["内包装"]],
  ["成品仓", ["入库", "外包装", "出库"]],
];
const rows = tree.flatMap(([g, kids], gi) => {
  const lastGroup = gi === tree.length - 1;
  const leaves = kids.map((text, i) => ({ text, folder: false, last: i === kids.length - 1, lastGroup }));
  return g ? [{ text: g, folder: true, last: false, lastGroup }, ...leaves] : leaves;
});

const params = ["阻焊塞孔程度", "阻焊塞孔程序", "塞孔最小孔径", "塞孔最大孔径", "塞孔深度", "阻焊塞孔面", "是否为盘中孔", "控深盲孔是否", "过孔工艺", "不允许有绿油", "不允许假性", "是否背钻孔", "单面开窗不塞"];

const red = "#c80000";
const checks: [string, string][] = [
  ...["图形电镀_0", "碱性蚀刻_0", "退锡_0", "外层AOI_1", "曝光_0", "字符_0", "铣板_0", "OSP_0", "外观检查_1"].map(
    (n): [string, string] => [`（卡死需处理）【${n}】流程没有计算工时,请检查!`, red]),
  ["493（卡死需处理）新板边订单需计算新板边参数!", red],
  ["请核实添加在字符底层标记是否镜像。", "#6495d8"],
  ["537（卡死需处理）没有新板边参数，请核实重新封边并且运行（测试新板边测试）项。", red],
  ["571（卡死需处理）未执行功能检查工步的附表“产品剖面信息”的“计算剖面信息”的操...", "#fff"],
  ["(卡死需处理)594.CAM比预审少了如下编码：【600110100237】【600110101095】【600310...", red],
  ["(卡死需处理)此板存在卡死项，请处理!", red],
];

function Node({ r }: { r: (typeof rows)[number] }) {
  const dash = { stroke: "#333", strokeDasharray: "1 1", fill: "none" };
  return (
    <NodeCell>
      <svg width={r.folder ? 36 : 52} height="19">
        {!(r.lastGroup && !r.folder) && <path d={`M24.5 0V${r.lastGroup ? 9 : 19}`} {...dash} />}
        {r.folder ? (
          <>
            <path d="M29 9.5h6" {...dash} />
            <rect x="20.5" y="5.5" width="8" height="8" fill="#f4f4f4" stroke="#8a8a8a" />
            <path d="M22 9.5h5" stroke="#222" />
          </>
        ) : (
          <path d={`M40.5 0V${r.last ? 9.5 : 19}M40.5 9.5H51`} {...dash} />
        )}
      </svg>
      <NodeLabel>
        {r.folder ? (
          <svg width="16" height="16" viewBox="0 0 16 16">
            <path d="M1 14V2h5l2 2h7v10z" fill="#d9a72b" stroke="#b98a1e" /><path d="M4 15V6h4l1 1h6v8z" fill="#fdc80f" stroke="#dca01c" /><path d="M5 8h9v3H5z" fill="#fee36a" />
          </svg>
        ) : (
          <svg width="15" height="17" viewBox="0 0 15 17">
            <path d="M1 1h9l4 4v11H1z" fill="#dcecff" stroke="#7aa7dc" strokeWidth="1.400" /><path d="M9 1h5v5z" fill="#3f7fd0" /><path d="M2 2h6v8H2z" fill="#fff" opacity=".7" />
          </svg>
        )}
        {r.text}
      </NodeLabel>
    </NodeCell>
  );
}

/* ---------- taskbar drawings ---------- */
const taskIcons: React.ReactNode[] = [
  <svg key="0" width="32" height="32" viewBox="0 0 32 32"><path d="M16 30C8 28 1 20 2 12 4 7 7 5 9 6c1-4 5-5 7-3 3-2 6-1 7 3 3-1 6 2 7 6 1 8-6 16-14 18z" fill="#fbd98f" stroke="#d39a3a" /><path d="M16 29L6 9M16 29L12 5M16 29l4-24M16 29L27 9" stroke="#d9a24a" /><path d="M20 14l2 4 5 1-4 3 1 5-4-3-4 3 1-5-4-3 5-1z" fill="#f28b2a" stroke="#c95f12" /></svg>,
  <svg key="1" width="30" height="32" viewBox="0 0 30 32"><rect x="3" y="1" width="24" height="30" rx="2" fill="#eaf7fb" stroke="#8cc0d2" /><path d="M6 6h18M6 10h18M6 14h18M6 18h18M6 22h18M6 26h18" stroke="#3f9dc0" strokeWidth="2" /></svg>,
  <svg key="2" width="32" height="34" viewBox="0 0 32 34"><path d="M1 3h28l2 2v27H1z" fill="#2844d8" stroke="#122080" /><rect x="9" y="3" width="14" height="10" fill="#d8dbe4" /><rect x="12" y="4" width="4" height="8" fill="#2844d8" /><rect x="4" y="15" width="24" height="17" fill="#fff" /><path d="M6 19h20M6 23h20M6 28h9" stroke="#c84040" /><path d="M18 25v4h3v-2h-3M23 25v3h3m0-3v5" stroke="#222" fill="none" /></svg>,
  <svg key="3" width="30" height="32" viewBox="0 0 30 32"><path d="M28 1c-3 5-8 3-13 5C5 10 1 19 3 26c3 7 15 6 20 1l4-13H16l-2 5h6l-2 6c-4 2-8 1-8-3 0-8 5-12 12-13 4-1 6-4 6-8z" fill="#ee2e18" stroke="#8e1608" /></svg>,
  <svg key="4" width="34" height="34" viewBox="0 0 34 34"><path d="M4 32V2h18" fill="none" stroke="#0f8f3d" strokeWidth="1.5" /><path d="M12 8h10c10 0 11 14 1 15h-6v8h-7v-8H8v-5h13c3 0 4-4 1-4H9z" fill="#0f9a41" /></svg>,
  null,
  <svg key="6" width="32" height="32" viewBox="0 0 32 32"><path d="M3 2h5l8 11L27 2h3L18 16l11 14h-6l-8-10-9 10H2l11-14z" fill="#7a1088" stroke="#fff" strokeWidth="1.4" /></svg>,
  <svg key="7" width="32" height="32" viewBox="0 0 32 32"><path d="M12 6l18 4-2 20-16-2z" fill="#fff" stroke="#2a5699" /><path d="M20 14h8M20 18h7M16 22h11M16 26h10" stroke="#3f6ab0" strokeWidth="2" /><path d="M3 3l17 1-2 20-16 2z" fill="#dfeafa" stroke="#2a5699" /><path d="M6 9l2 11 3-9 2 9 4-12" stroke="#1d4b94" strokeWidth="2.4" fill="none" /></svg>,
  <svg key="8" width="32" height="32" viewBox="0 0 32 32"><path d="M12 6l18 4-2 20-16-2z" fill="#e9f5de" stroke="#3b8a2c" /><path d="M20 16h9M14 22h14M25 10l-2 19M18 20v8" stroke="#5fa540" strokeWidth="2" /><path d="M3 3l17 1-2 20-16 2z" fill="#dff0cf" stroke="#3b8a2c" /><path d="M7 8l7 12M15 8L6 21" stroke="#2f7d22" strokeWidth="3" /></svg>,
  null,
  <svg key="10" width="32" height="32" viewBox="0 0 32 32"><circle cx="16" cy="16" r="16" fill="#2f96f5" /><path d="M8 6c5 4 10 5 16 7 1 4-2 7-4 10h3l-7 7 1-6h-3c-4-3-5-6-5-9l3 1c-3-3-4-6-4-10z" fill="#fff" /></svg>,
  <svg key="11" width="34" height="34" viewBox="0 0 34 34"><rect x="1" y="1" width="16" height="32" fill="#a81d22" stroke="#fff" /><rect x="17" y="1" width="16" height="32" fill="#5d5d5d" stroke="#fff" /><circle cx="17" cy="17" r="12" fill="#fff" /><circle cx="17" cy="17" r="6" fill="none" stroke="#222" strokeWidth="2" /><path d="M17 0v34M0 17h34" stroke="#fff" strokeWidth="1.5" /><path d="M17 13v8M13 17h8" stroke="#a81d22" strokeWidth="2" /></svg>,
];
const Camera = () => (
  <svg width="34" height="32" viewBox="0 0 34 32"><path d="M3 5l6-4 8 4-3 5H6z" fill="#18a9b4" stroke="#0a4c55" /><path d="M3 15l8-5h13l8 8-4 9-13 3-10-6z" fill="#12606a" stroke="#062f36" /><ellipse cx="20" cy="19" rx="8" ry="7" fill="#3fc3a4" stroke="#063" /><ellipse cx="20" cy="19" rx="5" ry="4" fill="#0c4f7a" stroke="#f5e63a" strokeWidth="1.6" /><circle cx="21" cy="18" r="2" fill="#bff" /><path d="M5 24l8 4" stroke="#f5e63a" /></svg>
);

export default function App() {
  return (
    <Desktop>
      <Global />
      <Title>
        <TitleLeft>
          <Quick>
            <svg width="17" height="22" viewBox="0 0 17 22"><path d="M1 1h15l-2 12-6 2-1 5H2z" fill="#eefaf0" stroke="#0e8a43" /><path d="M6 15l2-10h6M7 10h5" stroke="#0e8a43" strokeWidth="2.6" fill="none" /></svg>
            <Brand>兴森快捷</Brand>
            <QuickBtn $w={40} aria-label="查询"><FaSearch /></QuickBtn>
            <QuickBtn $w={36} aria-label="帮助"><FaLifeRing /></QuickBtn>
            <QuickArrow $w={18} aria-label="更多"><Tri $dir="down" $s={3} /></QuickArrow>
            <QuickBtn $w={36} aria-label="表格"><TableIcon /></QuickBtn>
            <QuickArrow $w={18} aria-label="更多"><Tri $dir="down" $s={3} /></QuickArrow>
            <QuickBtn $w={42} aria-label="剪切"><FaCut /></QuickBtn>
            <QuickBtn $w={43} aria-label="影片"><FilmIcon /></QuickBtn>
            <QuickBtn $w={43} aria-label="复制"><CopyIcon /></QuickBtn>
            <QuickBtn $w={38} aria-label="网格"><BlocksIcon /></QuickBtn>
            <QuickArrow $w={14} aria-label="更多"><Tri $dir="down" $s={3} /></QuickArrow>
            <QuickBtn $w={40} aria-label="用户"><FaUser /></QuickBtn>
            <QuickBtn $w={46} aria-label="图表"><FaChartArea /></QuickBtn>
            <QuickBtn $w={38} aria-label="电脑"><FaLaptop /></QuickBtn>
            <QuickArrow $w={28} aria-label="更多"><Tri $dir="down" $s={3} /></QuickArrow>
            <QuickArrow $w={10} aria-label="自定义"><Tri $dir="down" $s={3} $c="#dfe6ee" /></QuickArrow>
          </Quick>
          <SystemTab>系统</SystemTab>
        </TitleLeft>
        <AppName>EDS工程系统</AppName>
        <TitleRight>
          <Caption>
            <CapBtn $w={27} $h={17} aria-label="最小化"><CapIcon k="min" /></CapBtn>
            <CapBtn $w={27} $h={17} aria-label="还原"><CapIcon k="restore" /></CapBtn>
            <CapBtn $w={46} $h={17} aria-label="关闭"><CapIcon k="close" /></CapBtn>
          </Caption>
          <StyleRow>
            <StyleBtn>Style <Tri $dir="down" $s={3} /></StyleBtn>
            <FaPhoneAlt />
          </StyleRow>
        </TitleRight>
      </Title>

      <Main>
        <Rail>
          <BarsBtn $h={40} aria-label="菜单"><FaBars size={24} /></BarsBtn>
          <RailRule />
          <RailBtn $h={46} aria-label="工厂"><Factory /></RailBtn>
          <RailBtn $h={44} $on aria-label="计算"><Calc /></RailBtn>
        </Rail>
        <Library>
          <LibHead>
            <span>组件库</span>
            <button aria-label="收起"><Tri $dir="left" $s={5} /></button>
            <button aria-label="固定"><FaSignInAlt /></button>
          </LibHead>
          <LibGroup><FormIcon />文件处理</LibGroup>
          <LibGroup><FormIcon />设计算法</LibGroup>
          <LibGroup $on><FormIcon />数据管理</LibGroup>
          <LibBody>
            <LibItem><Bolt />新流程指示</LibItem>
            <LibItem><FolderOpen />Bom查询2</LibItem>
            <LibItem><FolderOpen />预审关键物料</LibItem>
            <LibItem><Person />Nope单审核</LibItem>
          </LibBody>
        </Library>

        <Work>
          <DocTabs>
            <DocTab><Bolt /><strong>新流程指示</strong><button aria-label="关闭标签">×</button></DocTab>
            <button aria-label="标签列表"><Tri $dir="down" $s={5} /></button>
          </DocTabs>

          <Toolbar>
            <Tool><FaSearch /><span>型号查询(F)</span><Tri $dir="down" $s={3} /></Tool>
            <Toggles>
              <Toggle>
                <Track><SwitchInput type="checkbox" role="switch" /><span>OFF</span></Track>
                编写流程(R)
              </Toggle>
              <Toggle>
                <Track><SwitchInput type="checkbox" role="switch" /><span>OFF</span></Track>
                <span>启动修改(E)</span><span>取消(Z)</span>
              </Toggle>
            </Toggles>
            {tools.map((t) => (
              <Tool key={t.text} disabled={t.off}>
                {t.icon}<span>{t.text}</span>{t.arrow && <Tri $dir="down" $s={3} />}
              </Tool>
            ))}
          </Toolbar>

          <Pane>
            <Group $pb={2}>
              <Badge>主要信息</Badge>
              <GridBox>
                <DataTable $h={32}>
                  <colgroup>
                    <col style={{ width: 34 }} />
                    {mainCols.map(([n, w]) => <col key={n} style={{ width: w }} />)}
                    <col />
                  </colgroup>
                  <thead><tr><CornerTh />{mainCols.map(([n]) => <th key={n}>{n}</th>)}<RestTh /></tr></thead>
                  <tbody><tr><PointerTd><Tri $dir="right" $c="#000" /></PointerTd>{mainCols.map(([n, , v]) => <td key={n}>{v}</td>)}<td /></tr></tbody>
                </DataTable>
              </GridBox>
              <GridBox $w={201}>
                <DataTable $h={21}><thead><tr><th>合拼型号</th><th>生产型号</th></tr></thead></DataTable>
              </GridBox>
            </Group>
          </Pane>

          <SplitH><Tri $dir="up" /><Dots /><Tri $dir="up" /></SplitH>

          <Lower>
            <Pane>
              <Group $pb={1}>
                <Badge>【AX0TE00SA0】工艺流程</Badge>
                <SideTabs><SideTab>设备结构</SideTab></SideTabs>
                <Device>
                  <DeviceHead>单击节点加载工艺流程<FaComment /></DeviceHead>
                  <DeviceList />
                </Device>
                <SplitV $w={6}><Tri $dir="left" /><Dots $v /><Tri $dir="left" /></SplitV>
                <TreeBox>
                  <TreeView>
                    <TreeTable>
                      <colgroup><col style={{ width: 154 }} /><col style={{ width: 55 }} /><col style={{ width: 75 }} /><col style={{ width: 75 }} /><col style={{ width: 75 }} /><col /></colgroup>
                      <thead><tr><th>流程</th><th>BOM工厂</th><th>编写人</th><th>核审人</th><th>状态</th><th>PPC</th></tr></thead>
                      <tbody>
                        {rows.map((r, i) => (
                          <TreeRow key={i} $sel={r.text === "阻焊塞孔"}>
                            <td><Node r={r} /></td><td>P2</td><td>邹宇航</td><td /><td>已编写</td><td />
                          </TreeRow>
                        ))}
                      </tbody>
                    </TreeTable>
                  </TreeView>
                  <Scroll v size={17} before={375} thumb={251} after={1} grip />
                  <Scroll size={17} end={13} before={0} thumb={272} after={160} grip />
                </TreeBox>
              </Group>
            </Pane>
            <SplitV $w={6}><Tri $dir="left" /><Dots $v /><Tri $dir="left" /></SplitV>
            <Detail>
              <BlueTabs>
                <BlueTab $on>基本信息</BlueTab>
                <BlueTab>BOM</BlueTab>
                <Filler />
                <button aria-label="标签列表"><Tri $dir="down" $s={5} /></button>
              </BlueTabs>
              <Panels>
                <Panel>
                  <SubTabs><SubTab>基本参数</SubTab></SubTabs>
                  <ParamTable>
                    <colgroup><col style={{ width: 34 }} /><col /></colgroup>
                    <thead><tr><CornerTh /><th /></tr></thead>
                    <tbody>
                      {params.map((p, i) => <tr key={p}><td>{i === 0 && <Tri $dir="right" $c="#000" />}</td><td>{p}</td></tr>)}
                    </tbody>
                  </ParamTable>
                  <Fill $bg="#fff" />
                  <Scroll size={11} thumb={346} after={50} />
                </Panel>
                <SplitV $w={8} />
                <Panel>
                  <SubTabs $plain />
                  <PanelHead />
                  <Fill $bg="#f0f0f0"><Scroll v c="#999" /></Fill>
                </Panel>
                <Panel>
                  <SubTabs $plain />
                  <PanelHead />
                  <Fill $bg="#f0f0f0"><Scroll v c="#999" /></Fill>
                </Panel>
              </Panels>
            </Detail>
          </Lower>
        </Work>
      </Main>

      <Status>
        <StatusLeft>
          <StatusBtn $mr={5}>
            <svg width="22" height="20" viewBox="0 0 22 20" fill={navy}><rect width="10" height="9" rx="1" /><rect x="12" width="10" height="9" rx="1" /><rect y="11" width="10" height="9" rx="1" /><rect x="12" y="11" width="10" height="9" rx="1" /></svg>
            信息中心
          </StatusBtn>
          <StatusBtn $mr={46}><FaMale size={23} />龙敦远</StatusBtn>
          <span>Model:【正式】||DB:【正式库】</span>
        </StatusLeft>
        <span>兴森快捷 EMS工程系统 Version: 1.0.0.58</span>
        <time>2022-06-07 18:13:00</time>
      </Status>

      <Taskbar>
        <Orb aria-label="开始">
          <svg width="38" height="38" viewBox="0 0 38 38">
            <defs><radialGradient id="orb" cx=".5" cy=".8" r=".8"><stop offset="0" stopColor="#4fc4f2" /><stop offset=".6" stopColor="#1d5c97" /><stop offset="1" stopColor="#8fb2d0" /></radialGradient></defs>
            <circle cx="19" cy="19" r="18" fill="url(#orb)" stroke="#16324f" />
            <path d="M11 11c3-2 5-2 8 0l-2 8c-3-2-5-2-8 0z" fill="#f0672a" /><path d="M20 12c3 2 6 2 9 0l-2 8c-3 2-6 2-9 0z" fill="#8cc63e" />
            <path d="M9 20c3-2 5-2 8 0l-2 7c-3-2-5-2-8 0z" fill="#3ba3e8" /><path d="M18 21c3 2 6 2 9 0l-2 7c-3 2-6 2-9 0z" fill="#fcc62d" />
          </svg>
        </Orb>
        {taskIcons.map((ic, i) => <TaskBtn key={i} $on={i === 4} aria-label={`任务 ${i + 1}`}>{ic ?? <Camera />}</TaskBtn>)}
        <Filler />
        <Tray>
          <Tri $dir="up" $s={4} $c="#fff" />
          <svg width="17" height="16" viewBox="0 0 17 16"><path d="M0 15L10 1v8z" fill="#ee1c1c" /><path d="M10 5l7 10h-5l-3-4z" fill="#1fae3a" /></svg>
          <svg width="16" height="17" viewBox="0 0 16 17"><path d="M2 1v15" stroke="#fff" strokeWidth="2" /><path d="M3 2c4-2 5 2 10 0v8c-5 2-6-2-10 0z" fill="#fff" /><circle cx="11" cy="12" r="4.5" fill="#d8261c" /><path d="M9 10l4 4M13 10l-4 4" stroke="#fff" strokeWidth="1.4" /></svg>
          <FaVolumeUp size={15} />
          <svg width="15" height="16" viewBox="0 0 15 16" fill="none" stroke="#fff" strokeWidth="1.6"><rect x="5" y="3" width="9" height="8" /><path d="M7 14.5h6M10 11v3M1 1v4h3V1M2.500 5v8h3" /></svg>
          <Clock>18:13<br />2022/6/7</Clock>
          <ShowDesk aria-label="显示桌面" />
        </Tray>
      </Taskbar>

      <Ime>
        <svg width="72" height="22" viewBox="0 0 72 22">
          <path d="M1 3v17M5 3v17" stroke="#111" strokeWidth="1.5" strokeDasharray="2 2" />
          <rect x="15" y="8" width="15" height="9" rx="1" fill="#f0f0f0" stroke="#777" /><path d="M17 11h11M17 14h11" stroke="#666" strokeDasharray="1 1" /><path d="M20 8c0-4 6-1 8-5" stroke="#555" fill="none" />
          <circle cx="45" cy="11" r="8" fill="#1a2bb8" stroke="#b8c4f4" /><path d="M42 9c0-4 6-4 6 0 0 2-3 2-3 4" stroke="#fff" strokeWidth="2" fill="none" /><rect x="44" y="14" width="2" height="2" fill="#fff" />
          <rect x="63" y="5" width="6" height="2" fill="#fff" /><path d="M62 14h7l-3.500 4z" fill="#fff" />
        </svg>
      </Ime>

      <Dialog role="dialog" aria-labelledby="dlg">
        <DlgTitle>
          <svg width="14" height="14" viewBox="0 0 14 14"><rect x="6" y="1" width="7" height="7" fill="#fcd34a" stroke="#a87a10" /><rect x="1" y="4" width="4" height="5" fill="#d83a2a" stroke="#7a150c" /><rect x="6" y="9" width="5" height="4" fill="#4f8fe8" stroke="#2a559c" /></svg>
          <h2 id="dlg">检查确认</h2>
          <Caption>
            <CapBtn $w={27} $h={19} aria-label="最小化"><CapIcon k="min" /></CapBtn>
            <CapBtn $w={27} $h={19} aria-label="最大化"><CapIcon k="max" /></CapBtn>
            <CapBtn $w={47} $h={19} $red aria-label="关闭"><CapIcon k="close" /></CapBtn>
          </Caption>
        </DlgTitle>
        <DlgBody>
          <CheckBoxArea>
            <CheckView>
              <CheckTable>
                <colgroup><col style={{ width: 40 }} /><col style={{ width: 150 }} /><col /><col style={{ width: 84 }} /></colgroup>
                <thead><tr><th /><th>检查项</th><th>结果</th><th>确认</th></tr></thead>
                <tbody>
                  {checks.map(([t, c], i) => (
                    <tr key={i}>
                      <td>{i === 12 && <Tri $dir="right" $c="#000" $s={4} />}</td>
                      <td />
                      <Result $c={c} $sel={i === 12}>{t}</Result>
                      <td><Tick type="checkbox" aria-label={`确认 ${i + 1}`} /></td>
                    </tr>
                  ))}
                </tbody>
              </CheckTable>
            </CheckView>
            <Scroll v size={17} before={166} thumb={180} after={1} grip grey />
            <Scroll size={17} before={1} thumb={730} after={8} grip grey />
          </CheckBoxArea>
          <DlgButtons>
            <DlgBtn>导出</DlgBtn>
            <DlgBtn>确定</DlgBtn>
          </DlgButtons>
        </DlgBody>
      </Dialog>
    </Desktop>
  );
}
